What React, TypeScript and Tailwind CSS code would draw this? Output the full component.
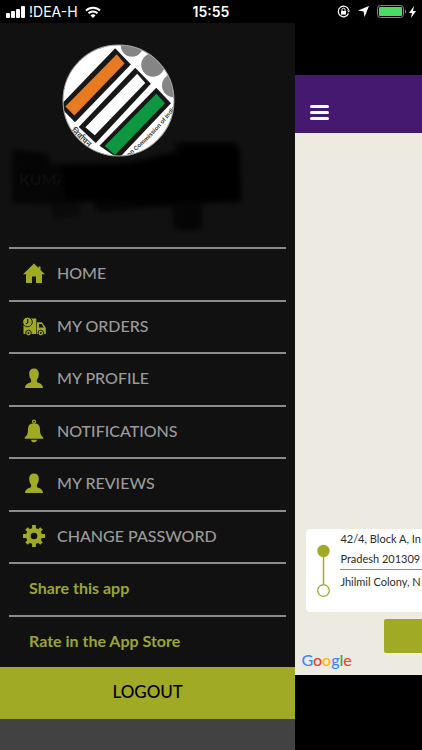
import React from "react";

const GREEN = "#a0aa25";

//icons
function HomeIcon() {
  return (
    <svg viewBox="0 0 24 24" className="w-6 h-6" fill={GREEN}>
      <path d="M12 2.500 1 13.200h3v8.800h6v-6.500h4V22h6v-8.800h3L18.500 9V5.500h-2v1.400z" />
    </svg>
  );
}

function TruckIcon() {
  return (
    <svg viewBox="0 0 24 24" className="w-6 h-6" fill={GREEN}>
      <path d="M5 4.500h9.300V20H1.500V8z" />
      <path d="M14.900 8.300h5l3.200 4.500.700 1.500V20h-8.900z" />
      <path d="M17 9.900h2.700l2 3.600H17z" fill="#111111" />
      <circle cx="5.500" cy="8" r="4.800" stroke="#111111" strokeWidth="0.900" />
      <path d="M5.800 5v3.300L4 10" fill="none" stroke="#111111" strokeWidth="1.100" />
      <circle cx="6.500" cy="19" r="2.800" stroke="#111111" strokeWidth="0.900" />
      <circle cx="18.800" cy="19" r="2.800" stroke="#111111" strokeWidth="0.900" />
      <circle cx="6.500" cy="19" r="0.900" fill="#111111" />
      <circle cx="18.800" cy="19" r="0.900" fill="#111111" />
    </svg>
  );
}

function UserIcon() {
  return (
    <svg viewBox="0 0 24 24" className="w-6 h-6" fill={GREEN}>
      <path d="M12 2.500c3.200 0 4.800 2 4.800 5 0 2.800-.7 5-1.900 6.200v2c.5 1.500 6.100 1.300 6.100 6.300H3c0-5 5.600-4.800 6.100-6.300v-2C7.900 12.500 7.200 10.300 7.200 7.500c0-3 1.600-5 4.800-5z" />
    </svg>
  );
}

function BellIcon() {
  return (
    <svg viewBox="0 0 24 24" className="w-6 h-6" fill={GREEN}>
      <circle cx="12" cy="2.600" r="1.500" fill="none" stroke={GREEN} strokeWidth="1.200" />
      <path d="M12 4.300c4.500 0 6 2.800 6 6.200 0 4.500 1 6.200 3.300 8v1.300H2.700v-1.300C5 16.700 6 15 6 10.500c0-3.400 1.500-6.200 6-6.200z" />
      <path d="M9 20.700h6c-.3 1.700-1.300 2.600-3 2.600s-2.700-.9-3-2.600z" />
    </svg>
  );
}

function GearIcon() {
  return (
    <svg viewBox="0 0 24 24" className="w-6 h-6">
      <g stroke={GREEN} strokeWidth="3.800">
        <path d="M12 1v22M1 12h22M4.500 4.500l15 15M19.500 4.500l-15 15" />
      </g>
      <circle cx="12" cy="12" r="8" fill={GREEN} />
      <circle cx="12" cy="12" r="3.300" fill="#111111" />
    </svg>
  );
}

const menu = [
  { label: "HOME", icon: <HomeIcon /> },
  { label: "MY ORDERS", icon: <TruckIcon /> },
  { label: "MY PROFILE", icon: <UserIcon /> },
  { label: "NOTIFICATIONS", icon: <BellIcon /> },
  { label: "MY REVIEWS", icon: <UserIcon /> },
  { label: "CHANGE PASSWORD", icon: <GearIcon /> },
];

const links = ["Share this app", "Rate in the App Store"];

function StatusBar() {
  return (
    <div className="grid grid-cols-3 items-center h-[23px] shrink-0 px-[6px] bg-black text-white text-sm font-['Inter',sans-serif]">
      <div className="flex items-center gap-1">
        <svg viewBox="0 0 19 12" className="w-[19px] h-3" fill="white">
          <rect x="0" y="7" width="4" height="5" rx="1" />
          <rect x="5" y="5" width="4" height="7" rx="1" />
          <rect x="10" y="3" width="4" height="9" rx="1" />
          <rect x="15" y="0" width="4" height="12" rx="1" />
        </svg>
        <span>!DEA-H</span>
        <svg viewBox="0 0 16 12" className="w-4 h-3 ml-[3px]" fill="none" stroke="white" strokeWidth="2">
          <path d="M1 4.500a10 10 0 0 1 14 0" />
          <path d="M3.500 7.300a6.400 6.400 0 0 1 9 0" />
          <path d="M8 12 5.500 9.400a3.600 3.600 0 0 1 5 0z" fill="white" stroke="none" />
        </svg>
      </div>
      <span className="text-center font-semibold">15:55</span>
      <div className="flex items-center justify-end gap-2">
        <svg viewBox="0 0 13 13" className="w-[13px] h-[13px]" fill="none" stroke="white">
          <path d="M11.500 8.500a5.300 5.300 0 1 1 .2-3.500" strokeWidth="1.200" />
          <path d="M10 5.500h3l-1.300 2z" fill="white" stroke="none" />
          <rect x="4" y="6" width="5" height="3.600" fill="white" stroke="none" />
          <path d="M5 6V4.700a1.500 1.500 0 0 1 3 0V6" />
        </svg>
        <svg viewBox="0 0 11 11" className="w-[11px] h-[11px]" fill="white">
          <path d="M11 0 6.500 11 5.600 5.400 0 4.500z" />
        </svg>
        <div className="flex items-center gap-[2px]">
          <svg viewBox="0 0 30 13" className="w-[30px] h-[13px]">
            <rect x="0.500" y="0.500" width="26" height="12" rx="3" fill="none" stroke="#858585" />
            <rect x="2" y="2" width="23" height="9" rx="1" fill="#4cd964" />
            <path d="M28 4.500c1.500.5 1.500 3.500 0 4z" fill="#858585" />
          </svg>
          <svg viewBox="0 0 7 12" className="w-[7px] h-3" fill="white">
            <path d="M5 0 0 7h3l-1 5 5-7H4z" />
          </svg>
        </div>
      </div>
    </div>
  );
}

function Avatar() {
  return (
    <svg viewBox="36 29 338 338" className="w-[113px] h-[113px] ml-[62px]">
      <defs>
        <clipPath id="round">
          <circle cx="205" cy="198" r="166" />
        </clipPath>
        <path id="rim" d="M236 366 Q318 300 384 210" />
      </defs>
      <circle cx="205" cy="198" r="166" fill="white" />
      <g clipPath="url(#round)">
        <circle cx="245" cy="34" r="33" fill="#858585" />
        <circle cx="308" cy="92" r="35" fill="#858585" />
        <circle cx="370" cy="153" r="35" fill="#858585" />
        <path d="M195 42 242 90 75 263 28 215z" fill="#171717" />
        <path d="M200 60 223 87 73 243 46 216z" fill="#e87a22" />
        <path d="M255 100 302 148 137 325 86 277z" fill="#171717" />
        <path d="M261 118 285 146 134 302 106 278z" fill="white" />
        <path d="M318 160 362 206 205 372 148 333z" fill="#171717" />
        <path d="M318 178 344 206 194 361 164 334z" fill="#0d9740" />
        <text fontSize="18" fontWeight="600" fill="#333333" fontFamily="Liberation Sans, sans-serif">
          <textPath href="#rim">on Commission of India</textPath>
        </text>
        <text transform="translate(62 290) rotate(42)" fontSize="24" fontWeight="600" fill="#333333" fontFamily="Noto Sans, sans-serif">
          निर्वाचन
        </text>
      </g>
      <circle cx="205" cy="198" r="166" fill="none" stroke="#a5a5a5" strokeWidth="3" />
    </svg>
  );
}

function Profile() {
  return (
    <div className="relative h-56 shrink-0 pt-[21px]">
      <Avatar />
      <p className="px-[19px] mt-3 text-base leading-5 text-[#2c2c2c] font-semibold">KUMAR</p>
      {/* name is scribbled over */}
      <svg viewBox="0 0 295 120" className="absolute left-0 top-[117px] w-[295px] h-[120px]">
        <defs>
          <filter id="soft">
            <feGaussianBlur stdDeviation="2.500" />
          </filter>
        </defs>
        <g filter="url(#soft)" fill="black">
          <path d="M13 9 49 14 50 24 130 22 174 12 175 2 238 2 242 62 202 64 202 90 174 90 172 66 97 72 94 62 12 64z" opacity="0.700" />
          <path d="M48 62 80 62 80 75 54 80z" opacity="0.400" />
          <path d="M60 26 130 25 180 12 180 4 230 4 240 10 241 60 170 62 66 60z" />
        </g>
      </svg>
    </div>
  );
}

function Drawer() {
  return (
    <nav className="flex flex-col w-[70%] shrink-0 bg-[#111111]">
      <Profile />
      <ul className="flex flex-col flex-1 px-[9px]">
        {menu.map((item) => (
          <li key={item.label} className="flex-1 border-t-2 border-[#8c8c8c]">
            <a href="#" className="flex items-center h-full pl-[13px] pb-[2px] gap-[11px] text-base font-medium text-[#9b9b9b]">
              {item.icon}
              {item.label}
            </a>
          </li>
        ))}
        {links.map((label) => (
          <li key={label} className="flex-1 border-t-2 border-[#8c8c8c]">
            <a href="#" className="flex items-center h-full pl-5 pb-[2px] text-base font-bold text-[#9aa535]">
              {label}
            </a>
          </li>
        ))}
      </ul>
      <button className="h-[52px] shrink-0 pb-[2px] bg-[#a0aa25] text-[17px] font-medium text-black">LOGOUT</button>
      <div className="h-[31px] shrink-0 bg-[#424242]" />
    </nav>
  );
}

function MapPage() {
  return (
    <div className="flex flex-col w-screen shrink-0 pt-[52px] pb-[75px] bg-black">
      <header className="flex items-end h-[58px] shrink-0 px-[15px] pb-[13px] bg-[#45196f]">
        <button aria-label="Menu" className="flex flex-col gap-[3px] w-[19px]">
          <span className="h-[3px] w-full rounded-sm bg-white" />
          <span className="h-[3px] w-full rounded-sm bg-white" />
          <span className="h-[3px] w-full rounded-sm bg-white" />
        </button>
      </header>
      <main className="relative flex flex-col justify-end flex-1 pb-[22px] bg-[#edeae2]">
        <div className="flex gap-[10px] h-[83px] mx-[11px] mb-[7px] pl-[11px] rounded bg-white">
          <svg viewBox="0 0 13 83" className="w-[13px] h-[83px] shrink-0">
            <path d="M6.500 22v34" stroke={GREEN} strokeWidth="1.500" />
            <circle cx="6.500" cy="22" r="6.200" fill={GREEN} />
            <circle cx="6.500" cy="61.500" r="5.800" fill="white" stroke={GREEN} strokeWidth="1.300" />
          </svg>
          <div className="flex-1 text-[11px] text-[#2c2c2c]">
            <p className="leading-5 border-b border-[#8c8c8c]">
              42/4, Block A, In
              <br />
              Pradesh 201309
            </p>
            <p className="leading-6">Jhilmil Colony, N</p>
          </div>
        </div>
        <button aria-label="Continue" className="h-[34px] mx-[89px] rounded-xs bg-[#a0aa25]" />
        <div className="absolute left-[6px] bottom-[3px] text-base leading-6 font-medium">
          <span className="text-[#4285f4]">G</span>
          <span className="text-[#ea4335]">o</span>
          <span className="text-[#fbbc05]">o</span>
          <span className="text-[#4285f4]">g</span>
          <span className="text-[#34a853]">l</span>
          <span className="text-[#ea4335]">e</span>
        </div>
      </main>
    </div>
  );
}

export default function App() {
  return (
    <div className="flex flex-col min-h-screen bg-black overflow-hidden font-['Lato',sans-serif]">
      <StatusBar />
      <div className="flex flex-1 overflow-hidden">
        <Drawer />
        <MapPage />
      </div>
    </div>
  );
}
